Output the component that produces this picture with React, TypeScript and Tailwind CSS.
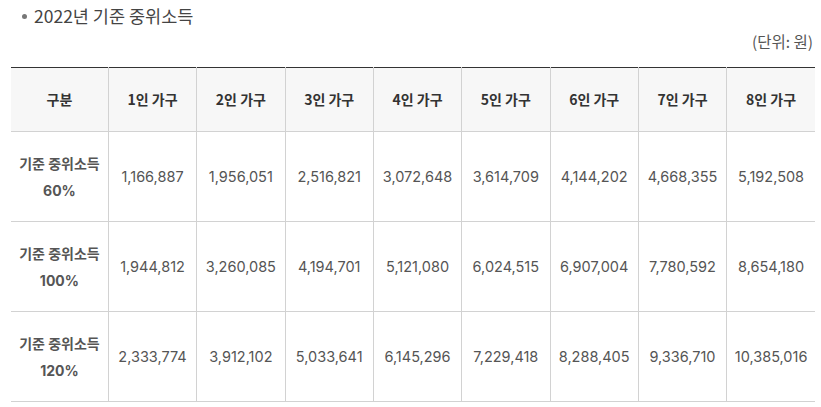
const headers = ["1인 가구", "2인 가구", "3인 가구", "4인 가구", "5인 가구", "6인 가구", "7인 가구", "8인 가구"];

const rows = [
  {
    pct: "60%",
    values: ["1,166,887", "1,956,051", "2,516,821", "3,072,648", "3,614,709", "4,144,202", "4,668,355", "5,192,508"],
  },
  {
    pct: "100%",
    values: ["1,944,812", "3,260,085", "4,194,701", "5,121,080", "6,024,515", "6,907,004", "7,780,592", "8,654,180"],
  },
  {
    pct: "120%",
    values: ["2,333,774", "3,912,102", "5,033,641", "6,145,296", "7,229,418", "8,288,405", "9,336,710", "10,385,016"],
  },
];

const kr = "font-['Noto_Sans_CJK_KR',sans-serif]";
const num = "font-['Inter','Noto_Sans_CJK_KR',sans-serif]";

export default function App() {
  return (
    <div className={`w-[821px] h-[407px] bg-white ${kr} overflow-hidden`}>
      <div className="pl-[22px] pt-[4px] flex items-center h-[28px] text-[17.5px] text-[#444]">
        <span className="w-[5px] h-[5px] rounded-full bg-[#777] mr-[7px]" />
        <span>2022년 기준 중위소득</span>
      </div>
      <div className="flex justify-end pr-[8px] h-[26px] items-center text-[15.5px] text-[#555] mt-[1px]">
        (단위: 원)
      </div>
      <table className="ml-[11px] mt-[12px] w-[804px] border-collapse table-fixed">
        <colgroup>
          <col className="w-[97px]" />
          {headers.map((h) => (
            <col key={h} className="w-[88px]" />
          ))}
        </colgroup>
        <thead>
          <tr className="h-[64px] bg-[#f7f7f7] border-t border-t-[#333] border-b border-b-[#d2d2d2]">
            <th className="text-[14px] font-bold text-[#333] text-center">구분</th>
            {headers.map((h) => (
              <th key={h} className="text-[14px] font-bold text-[#333] text-center border-l border-[#d2d2d2]">
                {h}
              </th>
            ))}
          </tr>
        </thead>
        <tbody>
          {rows.map((r) => (
            <tr key={r.pct} className="h-[90px] border-b border-[#d2d2d2]">
              <td className="text-center text-[14px] font-bold text-[#555] leading-[27px]">
                <div>기준 중위소득</div>
                <div className={num}>{r.pct}</div>
              </td>
              {r.values.map((v, i) => (
                <td key={i} className={`text-center text-[14.5px] text-[#555] border-l border-[#d2d2d2] ${num}`}>
                  {v}
                </td>
              ))}
            </tr>
          ))}
        </tbody>
      </table>
    </div>
  );
}
